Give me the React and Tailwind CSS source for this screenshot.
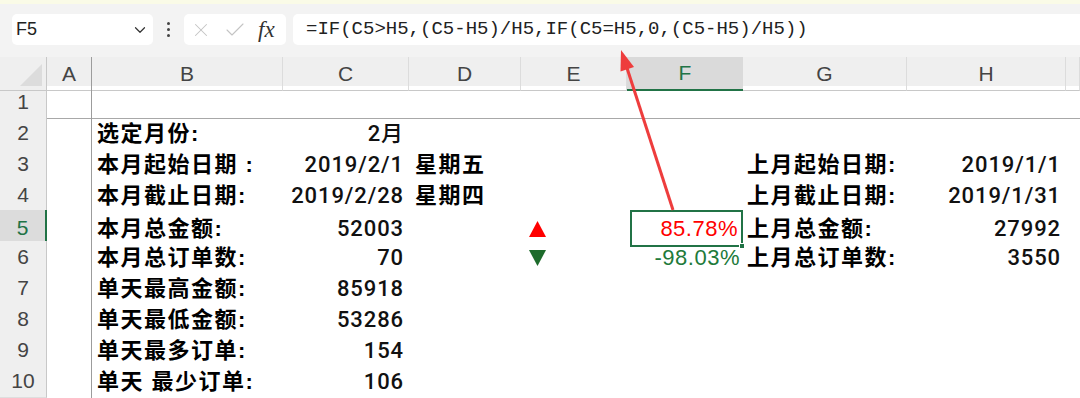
import { ChevronDown, X, Check } from 'lucide-react';

const COLS = ['A', 'B', 'C', 'D', 'E', 'F', 'G', 'H', ''];

const rows = [
  { n: 2, b: '选定月份:', c: '2月' },
  { n: 3, b: '本月起始日期 :', c: '2019/2/1', d: '星期五', g: '上月起始日期:', h: '2019/1/1' },
  { n: 4, b: '本月截止日期:', c: '2019/2/28', d: '星期四', g: '上月截止日期:', h: '2019/1/31' },
  { n: 5, b: '本月总金额:', c: '52003', e: 'up', f: '85.78%', g: '上月总金额:', h: '27992' },
  { n: 6, b: '本月总订单数:', c: '70', e: 'down', f: '-98.03%', g: '上月总订单数:', h: '3550' },
  { n: 7, b: '单天最高金额:', c: '85918' },
  { n: 8, b: '单天最低金额:', c: '53286' },
  { n: 9, b: '单天最多订单:', c: '154' },
  { n: 10, b: '单天 最少订单:', c: '106' },
];

const grid = 'grid grid-cols-[47px_45px_191px_126px_112px_106px_116px_164px_159px_1fr]';
const cjk = 'tracking-[1.5px] font-bold text-black';
const num = "font-['Roboto','Noto_Sans_CJK_SC',sans-serif] font-medium tracking-[0.9px] text-[#111]";

const Toolbar = () => (
  <div className="h-[53px] bg-[#f3f3f3] flex items-start pt-[10px] pl-[12px]">
    <div className="w-[141px] h-[31px] bg-white rounded-[5px] flex items-center justify-between pl-[4px] pr-[4px]">
      <span className="text-[18px] text-[#222]">F5</span>
      <ChevronDown size={18} strokeWidth={1.6} color="#333" />
    </div>
    <div className="w-[31px] h-[31px] flex flex-col items-center justify-center gap-[3px]">
      <span className="w-[3px] h-[3px] rounded-full bg-[#444]" />
      <span className="w-[3px] h-[3px] rounded-full bg-[#444]" />
      <span className="w-[3px] h-[3px] rounded-full bg-[#444]" />
    </div>
    <div className="w-[102px] h-[31px] bg-white rounded-[5px] flex items-center pl-[6px] gap-[11px]">
      <X size={22} strokeWidth={1.1} color="#c4c4c4" />
      <Check size={24} strokeWidth={1.1} color="#c4c4c4" />
      <span className="text-[23px] italic text-[#333] font-['Liberation_Serif',serif] leading-none">fx</span>
    </div>
    <div className="ml-[7px] flex-1 h-[31px] bg-white rounded-l-[5px] flex items-center pl-[13px]">
      <span className="font-['Liberation_Mono',monospace] text-[19px] text-[#222]">
        =IF(C5&gt;H5,(C5-H5)/H5,IF(C5=H5,0,(C5-H5)/H5))
      </span>
    </div>
  </div>
);

const HeaderRow = () => (
  <div className={`${grid} h-[29px] bg-[#efefef]`}>
    <div className="relative border-r border-b border-[#c8c8c8]">
      <div className="absolute right-[4px] bottom-[4px] w-0 h-0 border-l-[22px] border-l-transparent border-b-[22px] border-b-[#dcdcdc]" />
    </div>
    {COLS.map((c, i) =>
      c === 'F' ? (
        <div key={i} className="bg-[#dadada] border-b-2 border-[#217346] flex items-center justify-center text-[21px] text-[#217346]">
          {c}
        </div>
      ) : (
        <div
          key={i}
          className={`border-b border-[#c8c8c8] flex items-center justify-center text-[21px] text-[#444] ${
            i === 0 ? 'border-r border-r-[#9c9c9c]' : 'border-r border-r-[#dcdcdc]'
          }`}
        >
          {c}
        </div>
      )
    )}
  </div>
);

const Row1 = () => (
  <div className={`${grid} h-[31px]`}>
    <div className="bg-[#efefef] border-r border-[#c8c8c8] border-b border-b-[#a8a8a8] flex items-center justify-center text-[21px] text-[#444]">1</div>
    <div className="border-r border-r-[#9c9c9c] border-b border-b-[#a8a8a8]" />
    {COLS.slice(1).map((c, i) => (
      <div key={i} className="border-b border-b-[#a8a8a8]" />
    ))}
  </div>
);

const Triangle = ({ dir }) => (
  <svg width="17" height="16" viewBox="0 0 17 16">
    {dir === 'up' ? (
      <polygon points="8.5,0 17,16 0,16" fill="#ff0000" />
    ) : (
      <polygon points="0,0 17,0 8.5,16" fill="#1d6b2b" />
    )}
  </svg>
);

const DataRow = ({ r }) => {
  const sel = r.n === 5;
  return (
    <div className={`${grid} h-[31px]`}>
      <div
        className={`border-r border-[#c8c8c8] border-b border-b-[#dedede] flex items-center justify-center text-[21px] ${
          sel ? 'bg-[#dcdcdc] text-[#217346] border-r-2 border-r-[#217346]' : 'bg-[#efefef] text-[#444]'
        }`}
      >
        {r.n}
      </div>
      <div className="border-r border-r-[#9c9c9c]" />
      <div className={`flex items-center pl-[5px] whitespace-nowrap ${cjk}`}>{r.b}</div>
      <div className={`flex items-center justify-end pr-[5px] whitespace-nowrap ${num}`}>{r.c}</div>
      <div className={`flex items-center pl-[6px] whitespace-nowrap ${cjk}`}>{r.d}</div>
      <div className="flex items-center pl-[8px]">{r.e && <Triangle dir={r.e} />}</div>
      <div
        className={`relative flex items-center justify-end pr-[3px] whitespace-nowrap tracking-[0.5px] ${
          sel ? 'border-2 border-[#217346] ml-[3px] text-[#ff0000]' : 'text-[#217a3a]'
        }`}
      >
        {r.f}
        {sel && <span className="absolute right-[-4px] bottom-[-4px] w-[6px] h-[6px] bg-[#217346] border border-white" />}
      </div>
      <div className={`flex items-center pl-[4px] whitespace-nowrap ${cjk}`}>{r.g}</div>
      <div className={`flex items-center justify-end pr-[5px] whitespace-nowrap ${num}`}>{r.h}</div>
      <div />
    </div>
  );
};

const Arrow = () => (
  <svg className="absolute left-0 top-0 pointer-events-none" width="1080" height="398">
    <line x1="673" y1="210" x2="627" y2="68" stroke="#ee3d3d" strokeWidth="3" />
    <polygon points="621,50 634,67 620.5,71.5" fill="#ee3d3d" />
  </svg>
);

export default function App() {
  return (
    <div className="relative w-[1080px] h-[398px] overflow-hidden bg-white font-['Liberation_Sans','Noto_Sans_CJK_SC',sans-serif] text-[22px] text-black">
      <div className="h-[4px] bg-[#fafbe7]" />
      <Toolbar />
      <HeaderRow />
      <Row1 />
      {rows.map((r) => (
        <DataRow key={r.n} r={r} />
      ))}
      <Arrow />
    </div>
  );
}
